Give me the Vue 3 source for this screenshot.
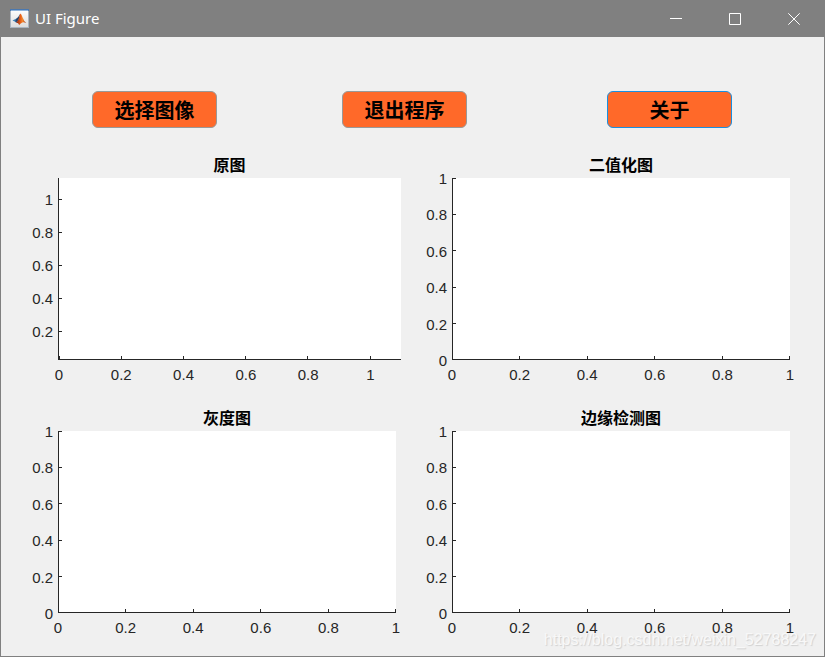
<script setup>
const fifths = [0, 0.2, 0.4, 0.6, 0.8, 1]

const charts = [
  { id: 'original', title: '原图', x: [-0.003, 1.098], y: [0.027, 1.127], wide: true },
  { id: 'binary', title: '二值化图', x: [0, 1], y: [0, 1] },
  { id: 'gray', title: '灰度图', x: [0, 1], y: [0, 1] },
  { id: 'edge', title: '边缘检测图', x: [0, 1], y: [0, 1] },
]

const actions = [
  { label: '选择图像' },
  { label: '退出程序' },
  { label: '关于', focused: true },
]

function ticks([min, max]) {
  return fifths
    .filter((value) => value >= min && value <= max)
    .map((value) => ({ value, at: `${((value - min) / (max - min)) * 100}%` }))
}
</script>

<template>
  <div class="window">
    <header class="titlebar">
      <svg class="app-icon" viewBox="0 0 19 19" aria-hidden="true">
        <defs>
          <linearGradient id="paper" x1="0" y1="0" x2="0" y2="1">
            <stop offset="0" stop-color="#ffffff" />
            <stop offset="1" stop-color="#dcdcdc" />
          </linearGradient>
          <linearGradient id="flame" x1="0" y1="0" x2="1" y2="0">
            <stop offset="0" stop-color="#7c1f12" />
            <stop offset="0.45" stop-color="#e8611a" />
            <stop offset="0.65" stop-color="#f08a30" />
            <stop offset="1" stop-color="#a52a12" />
          </linearGradient>
        </defs>
        <rect x="0.5" y="0.5" width="18" height="18" fill="url(#paper)" stroke="#a9b4c0" />
        <rect x="0" y="0" width="19" height="2" fill="#4a78b0" />
        <rect x="1" y="1" width="17" height="1" fill="#8fb4dc" />
        <path d="M2.5 11.5 L6.5 9.4 L8.6 10.6 L6 13.4 L4.7 12.6 Z" fill="#3d7fb5" />
        <path d="M6.5 9.4 Q8.2 8.8 10.2 4.8 L8.6 10.8 L6 13.4 L5.4 12 Z" fill="#26436b" />
        <path d="M10.4 4.4 Q11.4 4.8 12.6 8.4 Q14 12.4 16.2 14 Q13.8 13 12.4 13.4 Q10.6 14.2 9.2 16 Q8.6 13.6 6 13.4 Q8 12 8.8 9.4 Q9.6 5.6 10.4 4.4 Z" fill="url(#flame)" />
      </svg>
      <h1 class="caption">UI Figure</h1>
      <div class="window-controls">
        <button type="button" class="control" aria-label="最小化">
          <svg viewBox="0 0 12 12" aria-hidden="true"><path d="M0 5.5H12" /></svg>
        </button>
        <button type="button" class="control" aria-label="最大化">
          <svg viewBox="0 0 12 12" aria-hidden="true"><path d="M0.5 0.5H11.5V11.5H0.5Z" /></svg>
        </button>
        <button type="button" class="control" aria-label="关闭">
          <svg viewBox="0 0 12 12" aria-hidden="true"><path d="M0.3 0.3L11.7 11.7M11.7 0.3L0.3 11.7" /></svg>
        </button>
      </div>
    </header>

    <nav class="actions">
      <button
        v-for="action in actions"
        :key="action.label"
        type="button"
        class="action"
        :class="{ focused: action.focused }"
      >{{ action.label }}</button>
    </nav>

    <main class="charts">
      <section v-for="chart in charts" :key="chart.id" class="chart" :class="{ wide: chart.wide }">
        <h2 class="chart-title">{{ chart.title }}</h2>
        <div class="y-labels">
          <span v-for="t in ticks(chart.y)" :key="t.value" class="y-label" :style="{ bottom: t.at }">{{ t.value }}</span>
        </div>
        <div class="plot">
          <div class="scale">
            <i v-for="t in ticks(chart.y)" :key="'y' + t.value" class="y-tick" :style="{ bottom: t.at }"></i>
            <i v-for="t in ticks(chart.x)" :key="'x' + t.value" class="x-tick" :style="{ left: t.at }"></i>
          </div>
        </div>
        <div class="x-labels">
          <span v-for="t in ticks(chart.x)" :key="t.value" class="x-label" :style="{ left: t.at }">{{ t.value }}</span>
        </div>
      </section>
    </main>

    <div class="watermark">https://blog.csdn.net/weixin_52788247</div>
  </div>
</template>

<style>
body {
  background: #fff;
}
</style>

<style scoped>
.window {
  position: relative;
  display: flex;
  flex-direction: column;
  box-sizing: border-box;
  min-height: calc(100vh - 1px);
  margin-right: 1px;
  border: 1px solid #808080;
  border-top: 0;
  background: #f0f0f0;
  font-family: "Liberation Sans", "Noto Sans CJK SC", sans-serif;
}

.titlebar {
  display: flex;
  align-items: center;
  height: 37px;
  padding: 0 1px 0 9px;
  background: #808080;
  color: #fff;
}

.app-icon {
  width: 19px;
  height: 19px;
}

.caption {
  flex: 1;
  margin: 0 0 0 6px;
  padding-bottom: 2px;
  font: 400 15px/20px "Noto Sans", sans-serif;
}

.window-controls {
  display: flex;
}

.control {
  display: grid;
  place-items: center;
  width: 59px;
  height: 37px;
  padding: 0;
  border: 0;
  background: transparent;
}

.control svg {
  width: 12px;
  height: 12px;
  fill: none;
  stroke: #fff;
}

.actions {
  display: flex;
  justify-content: space-between;
  padding: 54px 92px 25px 91px;
}

.action {
  width: 125px;
  height: 37px;
  padding: 0;
  border: 1px solid #999;
  border-radius: 6px;
  background: #ff6929;
  color: #000;
  font: 700 20px/30px "Noto Sans CJK SC", sans-serif;
}

.action.focused {
  margin-left: 15px;
  border-color: #1a8fe0;
}

.charts {
  flex: 1;
  display: grid;
  grid-template-columns: 1fr 1fr;
  grid-auto-rows: 1fr;
  gap: 16px;
  padding: 0 34px 13px 17px;
}

.chart {
  display: grid;
  grid-template-columns: 40px 1fr;
  grid-template-rows: 25px minmax(120px, 1fr) 30px;
  color: #262626;
  font-size: 15px;
  line-height: 16px;
}

.chart.wide {
  margin-right: -5px;
}

.chart-title {
  grid-column: 2;
  margin: 0;
  padding-top: 1px;
  color: #000;
  font-size: 16px;
  line-height: 24px;
  text-align: center;
}

.y-labels,
.x-labels {
  position: relative;
}

.y-labels {
  grid-column: 1;
  margin: 1px 0 -1px;
}

.x-labels {
  grid-column: 2;
}

.y-label {
  position: absolute;
  right: 5px;
  transform: translateY(50%);
}

.x-label {
  position: absolute;
  top: 7px;
  transform: translateX(-50%);
}

.plot {
  position: relative;
  box-sizing: border-box;
  border: solid #262626;
  border-width: 0 0 1px 1px;
  background: #fff;
}

.scale {
  position: absolute;
  inset: 1px 1px -1px -1px;
}

.y-tick,
.x-tick {
  position: absolute;
  background: #262626;
}

.y-tick {
  left: 0;
  width: 4px;
  height: 1px;
}

.x-tick {
  bottom: 0;
  width: 1px;
  height: 4px;
}

.watermark {
  position: absolute;
  right: 8px;
  bottom: 6px;
  color: #f8f8f8;
  font-size: 16px;
  line-height: 20px;
  text-shadow: 1px 1px 1px #d0d0d0;
}
</style>
